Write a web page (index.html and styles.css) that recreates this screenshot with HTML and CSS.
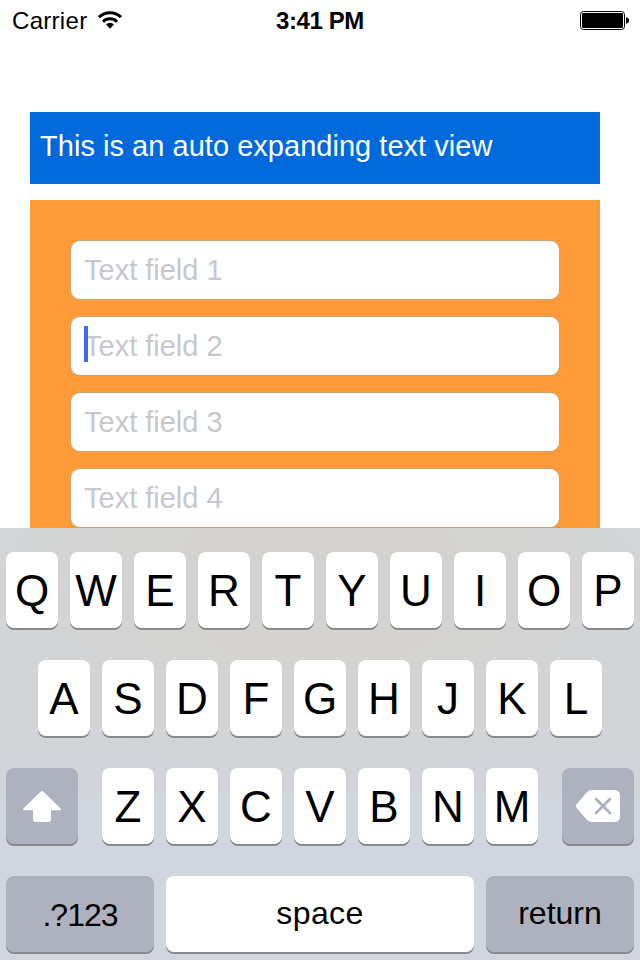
FILE: index.html
```html
<!DOCTYPE html>
<html lang="en">
<head>
<meta charset="utf-8">
<title>Auto expanding text view</title>
<link rel="stylesheet" href="styles.css">
</head>
<body>
<main class="screen">
  <header class="status">
    <div class="carrier"><span class="carrier-name">Carrier</span>
      <svg class="wifi" width="24" height="18" viewBox="0 0 24 18"><path d="M1 6.200a15.700 15.700 0 0 1 22 0" fill="none" stroke="#000" stroke-width="3"/><path d="M5 10.700a10 10 0 0 1 14 0" fill="none" stroke="#000" stroke-width="3"/><path d="M12 17.800l-4-4.300a5.600 5.600 0 0 1 8 0z"/></svg>
    </div>
    <span class="time">3:41 PM</span>
    <svg class="battery" width="50" height="20" viewBox="0 0 50 20"><rect x=".5" y=".5" width="44" height="18" rx="3" fill="none" stroke="#000"/><rect x="2" y="2" width="41" height="15" rx="1.2"/><path d="M46 6.3q3 .5 3 3.2t-3 3.2z"/></svg>
  </header>
  <section class="content">
    <div class="textview"><span>This is an auto expanding text view</span></div>
    <div class="fields">
      <div class="field"><span>Text field 1</span></div>
      <div class="field focused"><span>Text field 2</span></div>
      <div class="field"><span>Text field 3</span></div>
      <div class="field"><span>Text field 4</span></div>
    </div>
  </section>
  <section class="keyboard">
    <div class="row">
      <div class="key"><span>Q</span></div><div class="key"><span>W</span></div><div class="key"><span>E</span></div><div class="key"><span>R</span></div><div class="key"><span>T</span></div><div class="key"><span>Y</span></div><div class="key"><span>U</span></div><div class="key"><span>I</span></div><div class="key"><span>O</span></div><div class="key"><span>P</span></div>
    </div>
    <div class="row">
      <div class="key"><span>A</span></div><div class="key"><span>S</span></div><div class="key"><span>D</span></div><div class="key"><span>F</span></div><div class="key"><span>G</span></div><div class="key"><span>H</span></div><div class="key"><span>J</span></div><div class="key"><span>K</span></div><div class="key"><span>L</span></div>
    </div>
    <div class="row spread">
      <div class="key dark shift"><svg width="40" height="34" viewBox="0 0 40 34"><path d="M18.8 1.6q1.2-1.2 2.4 0L38.2 18q1.5 2.2-.8 2.2H29V29q0 3-3 3H14q-3 0-3-3v-8.800H2.600q-2.300 0-.8-2.200z" fill="#fff"/></svg></div>
      <div class="letters">
        <div class="key"><span>Z</span></div><div class="key"><span>X</span></div><div class="key"><span>C</span></div><div class="key"><span>V</span></div><div class="key"><span>B</span></div><div class="key"><span>N</span></div><div class="key"><span>M</span></div>
      </div>
      <div class="key dark delete"><svg width="44" height="32" viewBox="0 0 44 32"><path d="M16 0h22q6 0 6 6v20q0 6-6 6H16q-3 0-5-2L.8 18q-1.600-2 0-4L11 2q2-2 5-2z" fill="#fff"/><path d="M20 9l14 14M34 9L20 23" stroke="#adb1bd" stroke-width="2.600" stroke-linecap="round"/></svg></div>
    </div>
    <div class="row spread">
      <div class="key dark wide numbers"><span>.?123</span></div>
      <div class="key space"><span>space</span></div>
      <div class="key dark wide return"><span>return</span></div>
    </div>
  </section>
</main>
</body>
</html>
```
FILE: styles.css
```css
* { box-sizing: border-box; }
body { margin: 0; background: #fff; font-family: "Liberation Sans", Arial, sans-serif; color: #000; }
.screen { width: 640px; height: 960px; display: flex; flex-direction: column; overflow: hidden; }
.status { height: 40px; padding: 0 10px 0 12px; display: grid; grid-template-columns: 1fr auto 1fr; align-items: center; font-size: 24px; }
.carrier { display: flex; align-items: center; gap: 11px; padding-top: 1px; }
.carrier-name { letter-spacing: .3px; }
.wifi { display: block; margin-top: -2px; }
.time { font-weight: bold; font-size: 24px; letter-spacing: -.4px; padding: 2px 2px 0 0; }
.battery { display: block; justify-self: end; margin-top: 2px; }
.content { height: 488px; padding: 72px 40px 0 30px; display: flex; flex-direction: column; gap: 16px; }
.textview { height: 72px; background: #006adc; color: #fff; padding: 17px 10px; font-size: 29px; line-height: 34px; letter-spacing: .03px; white-space: nowrap; }
.fields { flex: 1; background: #ff9a38; padding: 40px 40px 0; display: flex; flex-direction: column; gap: 16px; }
.field { height: 60px; flex: none; border: 1px solid #c9a274; border-radius: 10px; background: #fff; padding: 12px 13px; font-size: 29px; line-height: 34px; color: #c7c7cd; position: relative; }
.focused::before { content: ""; position: absolute; left: 13px; top: 9px; width: 4px; height: 36px; background: #426bf2; }
.keyboard { height: 432px; flex: none; padding: 24px 6px 0; display: flex; flex-direction: column; gap: 32px; background: radial-gradient(ellipse 330px 200px at 50% 12%, #d5d3cf 0%, #d4d3d0 45%, rgba(211, 212, 213, 0) 100%), linear-gradient(#d3d5d7 0, #d1d4d8 58%, #d1d5de 64%, #d1d5de 100%); }
.row { height: 76px; display: flex; justify-content: center; gap: 12px; }
.spread { justify-content: space-between; }
.letters { display: flex; gap: 12px; }
.key { width: 52px; height: 76px; border-radius: 8px; background: #fff; box-shadow: 0 2px 0 #88898d; display: flex; align-items: center; justify-content: center; font-size: 44px; line-height: 52px; }
.key span { position: relative; top: 1px; }
.dark { background: #aeb2be; }
.shift, .delete { width: 72px; }
.shift svg { margin-top: 2px; }
.wide { width: 148px; font-size: 32px; }
.numbers { letter-spacing: -1px; }
.space { width: 308px; font-size: 32px; letter-spacing: .4px; }
.space span, .return span { margin-top: -5px; }
```
